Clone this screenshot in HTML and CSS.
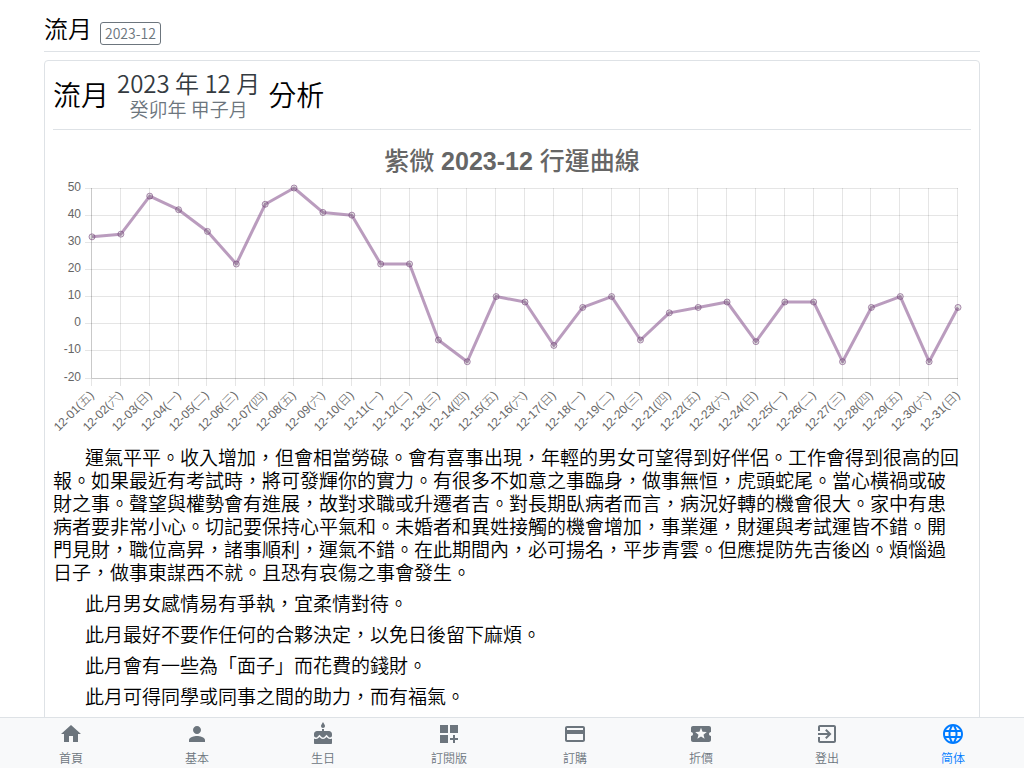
FILE: index.html
```html
<!DOCTYPE html>
<html lang="zh-Hant">
<head>
<meta charset="utf-8">
<meta name="viewport" content="width=device-width, initial-scale=1">
<title>流月 2023-12</title>
<link rel="stylesheet" href="styles.css">
</head>
<body>
<main class="page">
  <header class="page-header">
    <h1 class="page-title">流月</h1>
    <button class="month-button" type="button">2023-12</button>
  </header>
  <section class="card">
    <h2 class="card-title">
      <span>流月</span>
      <span class="period">
        <span class="period-solar">2023 年 12 月</span>
        <span class="period-lunar">癸卯年 甲子月</span>
      </span>
      <span>分析</span>
    </h2>
    <svg class="chart" id="chart" viewBox="0 0 918 300" role="img" aria-label="紫微 2023-12 行運曲線"></svg>
    <div class="report">
      <p>運氣平平。收入增加，但會相當勞碌。會有喜事出現，年輕的男女可望得到好伴侶。工作會得到很高的回報。如果最近有考試時，將可發輝你的實力。有很多不如意之事臨身，做事無恒，虎頭蛇尾。當心橫禍或破財之事。聲望與權勢會有進展，故對求職或升遷者吉。對長期臥病者而言，病況好轉的機會很大。家中有患病者要非常小心。切記要保持心平氣和。未婚者和異姓接觸的機會增加，事業運，財運與考試運皆不錯。開門見財，職位高昇，諸事順利，運氣不錯。在此期間內，必可揚名，平步青雲。但應提防先吉後凶。煩惱過日子，做事東謀西不就。且恐有哀傷之事會發生。</p>
      <p>此月男女感情易有爭執，宜柔情對待。</p>
      <p>此月最好不要作任何的合夥決定，以免日後留下麻煩。</p>
      <p>此月會有一些為「面子」而花費的錢財。</p>
      <p>此月可得同學或同事之間的助力，而有福氣。</p>
    </div>
  </section>
</main>
<nav class="tabbar">
  <a class="tab" href="#home"><svg class="tab-icon" viewBox="0 0 24 24"><path d="M10 20v-6h4v6h5v-8h3L12 3 2 12h3v8z"/></svg><span>首頁</span></a>
  <a class="tab" href="#profile"><svg class="tab-icon" viewBox="0 0 24 24"><path d="M12 12c2.21 0 4-1.79 4-4s-1.79-4-4-4-4 1.79-4 4 1.79 4 4 4zm0 2c-2.67 0-8 1.34-8 4v2h16v-2c0-2.66-5.33-4-8-4z"/></svg><span>基本</span></a>
  <a class="tab" href="#birthday"><svg class="tab-icon" viewBox="0 0 24 24"><path d="M12 6c1.11 0 2-.9 2-2 0-.38-.1-.73-.29-1.03L12 0l-1.71 2.97c-.19.3-.29.65-.29 1.03 0 1.1.9 2 2 2zm4.6 9.99l-1.07-1.07-1.08 1.07c-1.3 1.3-3.58 1.31-4.89 0l-1.07-1.07-1.09 1.07C6.75 16.64 5.88 17 4.96 17c-.73 0-1.4-.23-1.96-.61V21c0 .55.45 1 1 1h16c.55 0 1-.45 1-1v-4.61c-.56.38-1.23.61-1.96.61-.92 0-1.79-.36-2.44-1.01zM18 9h-5V7h-2v2H6c-1.66 0-3 1.34-3 3v1.54c0 1.08.88 1.96 1.96 1.96.52 0 1.02-.2 1.38-.57l2.14-2.13 2.13 2.13c.74.74 2.03.74 2.77 0l2.14-2.13 2.13 2.13c.37.37.86.57 1.38.57 1.08 0 1.96-.88 1.96-1.96V12C21 10.34 19.66 9 18 9z"/></svg><span>生日</span></a>
  <a class="tab" href="#edition"><svg class="tab-icon" viewBox="0 0 24 24"><path d="M3 3h8v8H3zM13 3h8v8h-8zM3 13h8v8H3zM18 13h-2v3h-3v2h3v3h2v-3h3v-2h-3z"/></svg><span>訂閱版</span></a>
  <a class="tab" href="#order"><svg class="tab-icon" viewBox="0 0 24 24"><path d="M20 4H4c-1.11 0-1.99.89-1.99 2L2 18c0 1.11.89 2 2 2h16c1.11 0 2-.89 2-2V6c0-1.11-.89-2-2-2zm0 14H4v-6h16v6zm0-10H4V6h16v2z"/></svg><span>訂購</span></a>
  <a class="tab" href="#discount"><svg class="tab-icon" viewBox="0 0 24 24"><path d="M20 12c0-1.1.9-2 2-2V6c0-1.1-.9-2-2-2H4c-1.1 0-1.99.9-1.99 2v4c1.1 0 1.99.9 1.99 2s-.89 2-2 2v4c0 1.1.9 2 2 2h16c1.1 0 2-.9 2-2v-4c-1.1 0-2-.9-2-2zm-4.42 4.8L12 14.5l-3.58 2.3 1.08-4.12-3.29-2.69 4.24-.25L12 5.8l1.54 3.95 4.24.25-3.29 2.69 1.09 4.11z"/></svg><span>折價</span></a>
  <a class="tab" href="#logout"><svg class="tab-icon" viewBox="0 0 24 24"><path d="M10.09 15.59L11.5 17l5-5-5-5-1.41 1.41L12.67 11H3v2h9.67l-2.58 2.59zM19 3H5c-1.11 0-2 .9-2 2v4h2V5h14v14H5v-4H3v4c0 1.1.89 2 2 2h14c1.1 0 2-.9 2-2V5c0-1.1-.9-2-2-2z"/></svg><span>登出</span></a>
  <a class="tab tab-language" href="#language"><svg class="tab-icon" viewBox="0 0 24 24"><path d="M11.99 2C6.47 2 2 6.48 2 12s4.47 10 9.99 10C17.52 22 22 17.52 22 12S17.52 2 11.99 2zm6.93 6h-2.95c-.32-1.25-.78-2.45-1.38-3.56 1.84.63 3.37 1.91 4.33 3.56zM12 4.04c.83 1.2 1.48 2.53 1.91 3.96h-3.82c.43-1.43 1.08-2.76 1.91-3.96zM4.26 14C4.1 13.36 4 12.69 4 12s.1-1.36.26-2h3.38c-.08.66-.14 1.32-.14 2 0 .68.06 1.34.14 2H4.26zm.82 2h2.95c.32 1.25.78 2.45 1.38 3.56-1.84-.63-3.37-1.9-4.33-3.56zm2.95-8H5.08c.96-1.66 2.49-2.93 4.33-3.56C8.81 5.55 8.35 6.75 8.03 8zM12 19.96c-.83-1.2-1.48-2.53-1.91-3.96h3.82c-.43 1.43-1.08 2.76-1.91 3.96zM14.34 14H9.66c-.09-.66-.16-1.32-.16-2 0-.68.07-1.35.16-2h4.68c.09.65.16 1.32.16 2 0 .68-.07 1.34-.16 2zm.25 5.56c.6-1.11 1.06-2.31 1.38-3.56h2.95c-.96 1.65-2.49 2.93-4.33 3.56zM16.36 14c.08-.66.14-1.32.14-2 0-.68-.06-1.34-.14-2h3.38c.16.64.26 1.31.26 2s-.1 1.36-.26 2h-3.38z"/></svg><span lang="zh-Hans">简体</span></a>
</nav>
<script src="chart.js"></script>
</body>
</html>
```
FILE: styles.css
```css
* {
  box-sizing: border-box;
}

body {
  margin: 0;
  background: #fff;
  color: #000;
  font-family: "Noto Sans CJK TC", sans-serif;
  font-size: 19px;
  font-weight: 350;
  line-height: 23px;
}

.page {
  max-width: 960px;
  margin: 0 auto;
  padding: 8px 12px 64px;
}

.page-header {
  display: flex;
  align-items: center;
  gap: 8px;
  padding-bottom: 2px;
  border-bottom: 1px solid #dee2e6;
}

.page-title {
  margin: 0;
  padding-bottom: 1px;
  font-size: 24px;
  font-weight: 350;
  line-height: 40px;
}

.month-button {
  margin-top: 10px;
  padding: 0 4px;
  border: 1px solid #6c757d;
  border-radius: 3px;
  background: none;
  color: #6c757d;
  font: inherit;
  font-size: 14px;
  line-height: 21px;
}

.card {
  margin-top: 8px;
  padding: 7px 8px 8px;
  border: 1px solid #dee2e6;
  border-radius: 4px;
}

.card-title {
  display: flex;
  align-items: center;
  gap: 8px;
  margin: 0 0 8px;
  padding-bottom: 9px;
  border-bottom: 1px solid #dee2e6;
  font-size: 28px;
  font-weight: 350;
  line-height: 34px;
}

.period {
  display: flex;
  flex-direction: column;
  align-items: center;
}

.period-solar {
  color: #343a40;
  font-size: 24px;
  line-height: 29px;
}

.period-lunar {
  color: #6c757d;
  font-size: 19px;
  line-height: 23px;
}

.chart {
  display: block;
  width: 100%;
  height: auto;
  margin-bottom: 7px;
  overflow: visible;
}

.chart text {
  fill: #666;
  font-family: "Liberation Sans", "Noto Sans CJK TC", sans-serif;
  font-size: 12px;
  font-weight: 400;
}

.chart .chart-title {
  font-size: 25px;
  font-weight: 700;
}

.chart .title-words {
  font-weight: 500;
}

.chart .weekday {
  font-weight: 300;
}

.grid-line {
  stroke: rgba(0, 0, 0, 0.1);
}

.axis-line {
  stroke: rgba(0, 0, 0, 0.12);
}

.series {
  fill: none;
  stroke: rgba(140, 90, 147, 0.6);
  stroke-width: 3;
  stroke-linejoin: round;
}

.point {
  fill: rgba(0, 0, 0, 0.1);
  stroke: rgba(120, 70, 125, 0.6);
}

.report {
  padding-right: 8px;
}

.report p {
  margin: 0 0 8px;
  text-indent: 32px;
}

.tabbar {
  position: fixed;
  right: 0;
  bottom: 0;
  left: 0;
  display: flex;
  padding: 4px 8px 0;
  border-top: 1px solid #dee2e6;
  background: #f8f9fa;
}

.tab {
  display: flex;
  flex: 1;
  flex-direction: column;
  align-items: center;
  gap: 2px;
  color: #6c757d;
  font-size: 12px;
  line-height: 20px;
  text-decoration: none;
}

.tab-language {
  color: #007bff;
}

.tab-language span {
  font-family: "Noto Sans CJK SC", sans-serif;
}

.tab-icon {
  width: 24px;
  height: 24px;
  fill: currentColor;
}
```
FILE: chart.js
```js
const values = [32, 33, 47, 42, 34, 22, 44, 50, 41, 40, 22, 22, -6, -14, 10, 8,
  -8, 6, 10, -6, 4, 6, 8, -6.6, 8, 8, -14, 6, 10, -14, 6];
const weekdays = '日一二三四五六';
const firstWeekday = 5;
const plot = { left: 39, right: 905, top: 50, bottom: 240, min: -20, max: 50 };
const chart = document.getElementById('chart');

function add(tag, attributes, text, parent = chart) {
  const element = document.createElementNS('http://www.w3.org/2000/svg', tag);
  for (const name in attributes) element.setAttribute(name, attributes[name]);
  if (text) element.textContent = text;
  parent.appendChild(element);
  return element;
}

function xAt(index) {
  return plot.left + index * (plot.right - plot.left) / (values.length - 1);
}

function yAt(value) {
  return plot.bottom - (value - plot.min) * (plot.bottom - plot.top) / (plot.max - plot.min);
}

// Align one-pixel lines with the pixel grid.
function crispX(position) {
  return Math.round(position) - 0.5;
}

function crispY(position) {
  return Math.floor(position) + 0.5;
}

const title = add('text', { class: 'chart-title', x: 459, y: 32, 'text-anchor': 'middle' });
add('tspan', { class: 'title-words' }, '紫微', title);
add('tspan', {}, ' 2023-12 ', title);
add('tspan', { class: 'title-words' }, '行運曲線', title);

for (let value = plot.min; value <= plot.max; value += 10) {
  const y = crispY(yAt(value));
  add('line', { class: 'grid-line', x1: plot.left - 7, x2: plot.right, y1: y, y2: y });
  add('text', { x: 28, y: y + 2.5, 'text-anchor': 'end' }, String(value));
}

values.forEach((value, index) => {
  const x = crispX(xAt(index));
  const day = String(index + 1).padStart(2, '0');
  const weekday = weekdays[(firstWeekday + index) % 7];
  add('line', { class: 'grid-line', x1: x, x2: x, y1: plot.top, y2: plot.bottom + 8 });
  const label = add('text', { transform: `translate(${x + 3} 258) rotate(-45)`, 'text-anchor': 'end' }, `12-${day}(`);
  add('tspan', { class: 'weekday' }, weekday, label);
  add('tspan', {}, ')', label);
});

const axisX = crispX(plot.left);
const axisY = crispY(plot.bottom);
add('line', { class: 'axis-line', x1: axisX, x2: axisX, y1: plot.top, y2: plot.bottom });
add('line', { class: 'axis-line', x1: plot.left, x2: plot.right, y1: axisY, y2: axisY });

add('polyline', { class: 'series', points: values.map((value, index) => `${xAt(index)},${yAt(value)}`).join(' ') });
values.forEach((value, index) => {
  add('circle', { class: 'point', cx: xAt(index), cy: yAt(value), r: 3 });
});
```
